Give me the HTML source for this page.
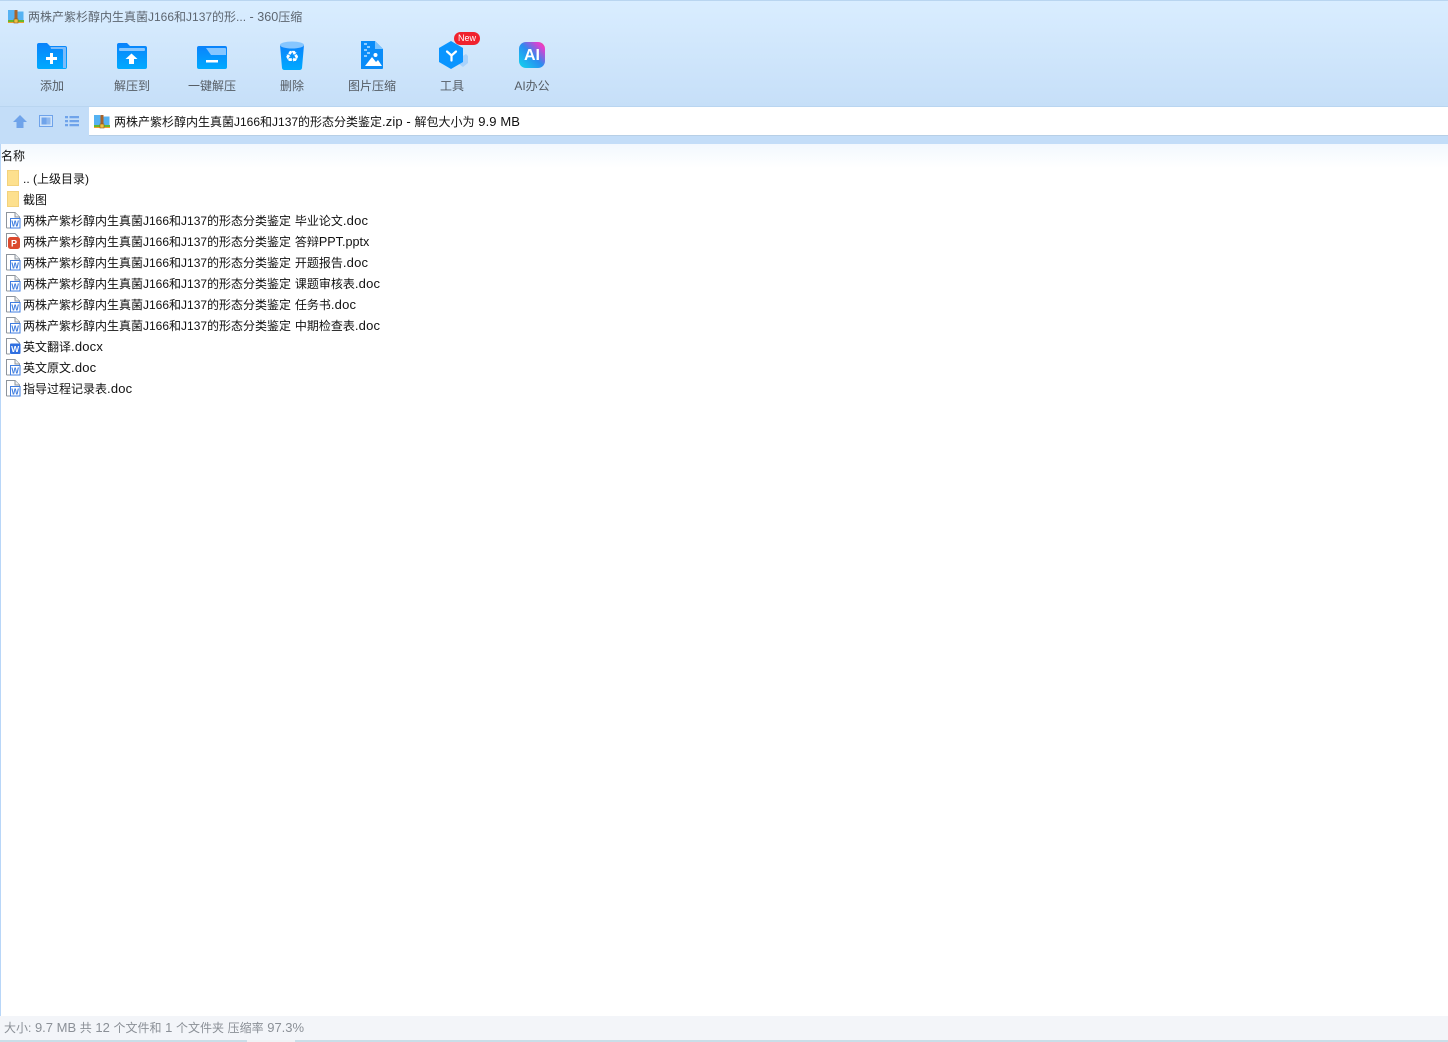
<!DOCTYPE html>
<html lang="zh"><head><meta charset="utf-8"><title>360压缩</title>
<style>
html,body{margin:0;padding:0;background:#fff}
#p{position:relative;width:1448px;height:1042px;overflow:hidden;background:#fff;font:12px/16px "Liberation Sans","Noto Sans CJK SC",sans-serif;color:#111}
#p div,#p svg{position:absolute}
.t{white-space:nowrap}
.l{font-size:13px;letter-spacing:.2px}
.z{font-size:13px;letter-spacing:0}
.top{left:0;top:0;width:1448px;height:107px;background:linear-gradient(#d9edff,#c6dff8);border-top:1px solid #b9d5f0;box-sizing:border-box;border-bottom:1px solid #b9d5f0}
.band{left:0;top:107px;width:1448px;height:37px;background:#c3ddf8}
.addr{left:89px;top:107px;width:1359px;height:28px;background:#fff;border-bottom:1px solid #b7cfe6}
.fade{left:0;top:144px;width:1448px;height:24px;background:linear-gradient(#f2f8fe,#fff)}
.lb{left:0;top:144px;width:1px;height:872px;background:#b8d6f8}
.status{left:0;top:1016px;width:1448px;height:24px;background:#f3f5f9}
.bot{left:0;top:1040px;width:1448px;height:2px;background:#c9dee8}
.lbl{top:78px;width:80px;text-align:center;color:#555c64;line-height:16px}
.r{left:23px;color:#111}
</style></head><body><div id="p">
<svg width="0" height="0" style="position:absolute"><defs>
<linearGradient id="b" x1="0" y1="0" x2="0" y2="1"><stop offset="0" stop-color="#0a82fb"/><stop offset="1" stop-color="#00aaff"/></linearGradient>
<symbol id="zip" viewBox="0 0 16 16"><path d="M0 1h6l1.500 1.500H15.500V14H0z" fill="#55b2f2"/><rect y="11" width="16" height="3" fill="#68b62c"/><rect y="13" width="16" height="1" fill="#f0a030"/><rect x="6.500" y="1" width="3" height="13" fill="#a8632a"/><rect x="6" y="10" width="4" height="4" fill="#f0c040" stroke="#8a5a20" stroke-width=".6"/></symbol>
<symbol id="fd" viewBox="0 0 12 16"><path d="M.5.5h11v15H.5z" fill="#fde08e" stroke="#f3d27c"/></symbol>
<symbol id="w" viewBox="0 0 16 17"><path d="M1.500 16V.5H10l4.500 4.500v2" fill="#fff" stroke="#8d949c"/><path d="M1.500 16H5" fill="none" stroke="#8d949c"/><path d="M10 .5V5h4.500" fill="#eef1f4" stroke="#8d949c"/><rect x="5.500" y="6.500" width="9.500" height="9.500" fill="#fff" stroke="#3f7de0"/><text x="10.200" y="14.500" font-family="Liberation Sans" font-size="8" font-weight="bold" fill="#3f7de0" text-anchor="middle">W</text></symbol>
</defs></svg>

<div class="top"></div>
<svg style="left:8px;top:9px" width="16" height="16"><use href="#zip"/></svg>
<div class="t" style="left:28px;top:9px;color:#5d6670">两株产紫杉醇内生真菌J166和J137的形...<span class="z" style="font-size:12.6px"> - 360</span>压缩</div>

<svg style="left:36px;top:42px" width="32" height="28" viewBox="0 0 32 28"><path d="M1 3a2 2 0 0 1 2-2h8l3 3h15a2 2 0 0 1 2 2v19a2 2 0 0 1-2 2H3a2 2 0 0 1-2-2z" fill="url(#b)"/><path d="M14.500 5H29a1 1 0 0 1 1 1v20h-3V8a1 1 0 0 0-1-1H15z" fill="#7cbcfa"/><path d="M14 11h3v4h4v3h-4v4h-3v-4h-4v-3h4z" fill="#fff"/></svg>
<svg style="left:116px;top:42px" width="32" height="28" viewBox="0 0 32 28"><path d="M1 3a2 2 0 0 1 2-2h8l3 3h15a2 2 0 0 1 2 2v19a2 2 0 0 1-2 2H3a2 2 0 0 1-2-2z" fill="url(#b)"/><rect x="3" y="6" width="26" height="3" rx="1" fill="#86c6ff"/><path d="M15.500 11.500l6 5.500h-3.500v5h-5v-5H9.500z" fill="#fff"/></svg>
<svg style="left:196px;top:44px" width="32" height="26" viewBox="0 0 32 26"><path d="M3 2h26a2 2 0 0 1 2 2v19a2 2 0 0 1-2 2H3a2 2 0 0 1-2-2V4a2 2 0 0 1 2-2z" fill="url(#b)"/><path d="M10 4h19a1 1 0 0 1 1 1v6H15z" fill="#86c6ff"/><rect x="10" y="16" width="12" height="2.500" fill="#fff"/></svg>
<svg style="left:279px;top:40px" width="26" height="31" viewBox="0 0 26 31"><path d="M1 5l2 23a2.500 2.500 0 0 0 2.500 2h15a2.500 2.500 0 0 0 2.500-2l2-23z" fill="url(#b)"/><ellipse cx="13" cy="5" rx="12" ry="3.500" fill="#86c6ff"/><text x="13" y="22" font-size="16" font-family="DejaVu Sans" fill="#fff" text-anchor="middle">♻</text></svg>
<svg style="left:360px;top:41px" width="24" height="28" viewBox="0 0 24 28"><path d="M1 0h14l8 8v19a1 1 0 0 1-1 1H1z" fill="#0a8cf8"/><path d="M15 0l8 8h-8z" fill="#7cc4ff"/><path d="M4 2h3v2H4zM7 5h3v2H7zM4 8h3v2H4zM7 11h3v2H7zM4 14h3v2H4z" fill="#8fcdff"/><circle cx="15.500" cy="14" r="2" fill="#fff"/><path d="M5 25l7-9 4 5 2-2 4 6z" fill="#fff"/></svg>
<svg style="left:437px;top:40px" width="34" height="32" viewBox="0 0 34 32"><path d="M24 17l5-3 2 2v7l-5 4-4-3z" fill="#a9d2fb"/><path d="M14 1l12 7v14l-12 7-12-7V8z" fill="#0a95ff"/><path d="M10 11.500l4.500 4 4.500-4M14.500 15.500v5" fill="none" stroke="#fff" stroke-width="2.200" stroke-linecap="round"/></svg>
<div style="left:454px;top:32px;width:26px;height:13px;border-radius:7px;background:#f0222e"></div>
<div class="t" style="left:454px;top:32px;width:26px;text-align:center;color:#fff;font-size:9px;line-height:13px">New</div>
<div style="left:519px;top:42px;width:26px;height:26px;border-radius:7px;background:linear-gradient(45deg,#12d8ee,#2a8cf0 50%,#e23ed0 85%,#f0507a)"></div>
<div class="t" style="left:519px;top:43px;width:26px;text-align:center;color:#fff;font-size:16px;font-weight:bold;line-height:26px">AI</div>

<div class="t lbl" style="left:12px">添加</div>
<div class="t lbl" style="left:92px">解压到</div>
<div class="t lbl" style="left:172px">一键解压</div>
<div class="t lbl" style="left:252px">删除</div>
<div class="t lbl" style="left:332px">图片压缩</div>
<div class="t lbl" style="left:412px">工具</div>
<div class="t lbl" style="left:492px">AI办公</div>

<div class="band"></div>
<div class="addr"></div>
<svg style="left:13px;top:115px" width="14" height="13" viewBox="0 0 14 13"><path d="M7 0l7 7h-3.500v6h-7V7H0z" fill="#6fa3ea"/></svg>
<svg style="left:39px;top:115px" width="14" height="12" viewBox="0 0 14 12"><rect x=".5" y=".5" width="13" height="11" fill="#cfe3fa" stroke="#6fa3ea"/><rect x="2.500" y="2.500" width="9" height="7" fill="#8fb8ee"/><rect x="2.500" y="2.500" width="5" height="7" fill="#6fa3ea"/></svg>
<svg style="left:65px;top:115px" width="14" height="12" viewBox="0 0 14 12"><path d="M0 1h3v2.200H0zM4.500 1H14v2.200H4.500zM0 5h3v2.200H0zM4.500 5H14v2.200H4.500zM0 9h3v2.200H0zM4.500 9H14v2.200H4.500z" fill="#6fa3ea"/></svg>
<svg style="left:94px;top:114px" width="16" height="16"><use href="#zip"/></svg>
<div class="t" style="left:114px;top:114px;color:#111">两株产紫杉醇内生真菌J166和J137的形态分类鉴定<span class="l" style="letter-spacing:.1px">.zip - </span>解包大小为<span class="l" style="letter-spacing:.1px"> 9.9 MB</span></div>

<div class="fade"></div>
<div class="lb"></div>
<div class="t" style="left:1px;top:148px;color:#111">名称</div>

<svg style="left:7px;top:170px" width="12" height="16"><use href="#fd"/></svg>
<div class="t r" style="top:171px">.. (上级目录)</div>
<svg style="left:7px;top:191px" width="12" height="16"><use href="#fd"/></svg>
<div class="t r" style="top:192px">截图</div>
<svg style="left:5px;top:212px" width="16" height="17"><use href="#w"/></svg>
<div class="t r" style="top:213px">两株产紫杉醇内生真菌J166和J137的形态分类鉴定<span class="l"> </span>毕业论文<span class="l">.doc</span></div>
<svg style="left:5px;top:233px" width="16" height="17" viewBox="0 0 16 17"><path d="M1.500 14V.5H10l3 3v3" fill="#fff" stroke="#8d949c"/><rect x="3" y="4" width="12" height="12" rx="2.500" fill="#db4a2e"/><text x="9" y="13.500" font-family="Liberation Sans" font-size="9" font-weight="bold" fill="#fff" text-anchor="middle">P</text></svg>
<div class="t r" style="top:234px">两株产紫杉醇内生真菌J166和J137的形态分类鉴定<span class="l"> </span>答辩<span class="z" style="font-size:12.6px">PPT.pptx</span></div>
<svg style="left:5px;top:254px" width="16" height="17"><use href="#w"/></svg>
<div class="t r" style="top:255px">两株产紫杉醇内生真菌J166和J137的形态分类鉴定<span class="l"> </span>开题报告<span class="l">.doc</span></div>
<svg style="left:5px;top:275px" width="16" height="17"><use href="#w"/></svg>
<div class="t r" style="top:276px">两株产紫杉醇内生真菌J166和J137的形态分类鉴定<span class="l"> </span>课题审核表<span class="l">.doc</span></div>
<svg style="left:5px;top:296px" width="16" height="17"><use href="#w"/></svg>
<div class="t r" style="top:297px">两株产紫杉醇内生真菌J166和J137的形态分类鉴定<span class="l"> </span>任务书<span class="l">.doc</span></div>
<svg style="left:5px;top:317px" width="16" height="17"><use href="#w"/></svg>
<div class="t r" style="top:318px">两株产紫杉醇内生真菌J166和J137的形态分类鉴定<span class="l"> </span>中期检查表<span class="l">.doc</span></div>
<svg style="left:5px;top:338px" width="16" height="17" viewBox="0 0 16 17"><path d="M1.500 16V.5H10l4.500 4.500v2" fill="#fff" stroke="#8d949c"/><path d="M1.500 16H5" stroke="#8d949c"/><rect x="5" y="5.500" width="10.500" height="10.500" rx="1" fill="#2f6fe0"/><text x="10.200" y="14" font-family="Liberation Sans" font-size="8.500" font-weight="bold" fill="#fff" text-anchor="middle">W</text></svg>
<div class="t r" style="top:339px">英文翻译<span class="l">.docx</span></div>
<svg style="left:5px;top:359px" width="16" height="17"><use href="#w"/></svg>
<div class="t r" style="top:360px">英文原文<span class="l">.doc</span></div>
<svg style="left:5px;top:380px" width="16" height="17"><use href="#w"/></svg>
<div class="t r" style="top:381px">指导过程记录表<span class="l">.doc</span></div>

<div class="status"></div>
<div class="t" style="left:4px;top:1020px;color:#8b9097">大小:<span class="z"> 9.7 MB </span>共<span class="z"> 12 </span>个文件和<span class="z"> 1 </span>个文件夹<span class="z"> </span>压缩率<span class="z"> 97.3%</span></div>
<div class="bot"></div>
<div style="left:247px;top:1040px;width:48px;height:2px;background:#f0f3f6"></div>
</div></body></html>
